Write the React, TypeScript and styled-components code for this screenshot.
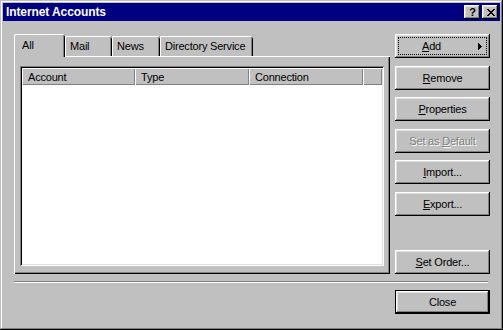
import React from "react";
import styled, { createGlobalStyle } from "styled-components";

const GlobalStyle = createGlobalStyle`
  html, body {
    margin: 0;
    padding: 0;
    background: #c0c0c0;
  }
  body {
    font-family: "Liberation Sans", Arial, sans-serif;
    font-size: 11px;
    letter-spacing: -0.2px;
    color: #000;
  }
`;

const raised =
  "inset -1px -1px #000, inset 1px 1px #fff, inset -2px -2px #808080, inset 2px 2px #dfdfdf";

const Window = styled.div`
  width: 503px;
  height: 330px;
  box-sizing: border-box;
  padding: 3px;
  background: #c0c0c0;
  box-shadow: inset -1px -1px #000, inset 1px 1px #c0c0c0,
    inset -2px -2px #808080, inset 2px 2px #fff;
  display: flex;
  flex-direction: column;
`;

const TitleBar = styled.div`
  height: 18px;
  background: #000080;
  display: flex;
  align-items: center;
  padding: 0 2px 0 3px;
`;

const TitleText = styled.div`
  flex: 1;
  color: #fff;
  font-weight: bold;
  font-size: 12px;
  letter-spacing: -0.1px;
`;

const CaptionButton = styled.div<{ $gap?: number }>`
  width: 16px;
  height: 14px;
  margin-left: ${(p) => p.$gap ?? 0}px;
  background: #c0c0c0;
  box-shadow: ${raised};
  display: flex;
  align-items: center;
  justify-content: center;
  font-weight: bold;
  font-size: 11px;
  line-height: 14px;
  padding-left: 1px;
  box-sizing: border-box;
`;

const Body = styled.div`
  flex: 1;
  padding: 13px 10px 0 11px;
  display: flex;
  flex-direction: column;
`;

const TopRow = styled.div`
  display: flex;
  height: 240px;
`;

const TabControl = styled.div`
  width: 376px;
  display: flex;
  flex-direction: column;
`;

const TabStrip = styled.div`
  display: flex;
  align-items: flex-start;
  height: 22px;
`;

const Tab = styled.div<{ $active?: boolean; $width: number }>`
  position: relative;
  z-index: ${(p) => (p.$active ? 2 : 0)};
  width: ${(p) => p.$width}px;
  height: ${(p) => (p.$active ? 23 : 20)}px;
  margin-top: ${(p) => (p.$active ? 0 : 2)}px;
  box-sizing: border-box;
  padding: ${(p) => (p.$active ? "4px 0 0 8px" : "3px 0 0 5px")};
  background: #c0c0c0;
  border-radius: 2px 2px 0 0;
  box-shadow: inset 1px 0 #fff, inset 0 1px #fff, inset -1px 0 #000,
    inset -2px 0 #808080;
  line-height: 14px;
  white-space: nowrap;
`;

const Panel = styled.div`
  height: 218px;
  box-sizing: border-box;
  padding: 10px 6px 0 6px;
  background: #c0c0c0;
  box-shadow: inset 1px 1px #fff, inset -1px -1px #000,
    inset -2px -2px #808080;
`;

const ListView = styled.div`
  height: 200px;
  box-sizing: border-box;
  padding: 2px;
  background: #fff;
  box-shadow: inset 1px 1px #808080, inset -1px -1px #fff,
    inset 2px 2px #000, inset -2px -2px #dfdfdf;
`;

const HeaderRow = styled.div`
  display: flex;
  height: 17px;
`;

const HeaderCell = styled.div<{ $width?: number }>`
  ${(p) => (p.$width ? `width: ${p.$width}px;` : "flex: 1;")}
  box-sizing: border-box;
  padding: 1px 0 0 6px;
  background: #c0c0c0;
  box-shadow: inset 1px 1px #fff, inset -1px -1px #808080;
  line-height: 16px;
  white-space: nowrap;
`;

const ButtonColumn = styled.div`
  width: 95px;
  margin-left: 5px;
  display: flex;
  flex-direction: column;
`;

const Button = styled.div<{
  $gap?: number;
  $push?: boolean;
  $default?: boolean;
  $disabled?: boolean;
}>`
  height: 24px;
  flex-shrink: 0;
  margin-top: ${(p) => (p.$push ? "auto" : `${p.$gap ?? 0}px`)};
  box-sizing: border-box;
  background: #c0c0c0;
  box-shadow: ${(p) =>
    p.$default
      ? "inset 0 0 0 1px #000, inset -2px -2px #000, inset 2px 2px #fff, inset -3px -3px #808080, inset 3px 3px #dfdfdf"
      : raised};
  display: flex;
  align-items: center;
  justify-content: center;
  padding: 3px;
  color: ${(p) => (p.$disabled ? "#808080" : "#000")};
  text-shadow: ${(p) => (p.$disabled ? "1px 1px #fff" : "none")};
  white-space: nowrap;
  line-height: 14px;
`;

const FocusRing = styled.div`
  flex: 1;
  align-self: stretch;
  border: 1px dotted #000;
  display: flex;
  align-items: center;
  padding-left: 23px;
`;

const Arrow = styled.svg`
  margin-left: auto;
  margin-right: 4px;
`;

const Separator = styled.div`
  width: 474px;
  margin-top: 7px;
  border-top: 1px solid #808080;
  border-bottom: 1px solid #fff;
`;

const BottomRow = styled.div`
  display: flex;
  justify-content: flex-end;
  margin-top: 7px;
`;

const CloseWrap = styled.div`
  width: 95px;
  display: flex;
  flex-direction: column;
`;

const tabs = [
  { label: "All", width: 51, active: true },
  { label: "Mail", width: 47 },
  { label: "News", width: 48 },
  { label: "Directory Service", width: 93 },
];

const App: React.FC = () => {
  return (
    <>
      <GlobalStyle />
      <Window>
        <TitleBar>
          <TitleText>Internet Accounts</TitleText>
          <CaptionButton>?</CaptionButton>
          <CaptionButton $gap={2}>
            <svg width="8" height="7" viewBox="0 0 8 7" shapeRendering="crispEdges">
              <path
                d="M0 0h2v1H0zM6 0h2v1H6zM1 1h2v1H1zM5 1h2v1H5zM2 2h4v1H2zM3 3h2v1H3zM2 4h4v1H2zM1 5h2v1H1zM5 5h2v1H5zM0 6h2v1H0zM6 6h2v1H6z"
                fill="#000"
              />
            </svg>
          </CaptionButton>
        </TitleBar>
        <Body>
          <TopRow>
            <TabControl>
              <TabStrip>
                {tabs.map((t) => (
                  <Tab key={t.label} $active={t.active} $width={t.width}>
                    {t.label}
                  </Tab>
                ))}
              </TabStrip>
              <Panel>
                <ListView>
                  <HeaderRow>
                    <HeaderCell $width={113}>Account</HeaderCell>
                    <HeaderCell $width={114}>Type</HeaderCell>
                    <HeaderCell $width={114}>Connection</HeaderCell>
                    <HeaderCell />
                  </HeaderRow>
                </ListView>
              </Panel>
            </TabControl>
            <ButtonColumn>
              <Button>
                <FocusRing>
                  <span>
                    <u>A</u>dd
                  </span>
                  <Arrow width="4" height="7" viewBox="0 0 4 7" shapeRendering="crispEdges">
                    <path d="M0 0h1v7H0zM1 1h1v5H1zM2 2h1v3H2zM3 3h1v1H3z" fill="#000" />
                  </Arrow>
                </FocusRing>
              </Button>
              <Button $gap={8}>
                <span>
                  <u>R</u>emove
                </span>
              </Button>
              <Button $gap={7}>
                <span>
                  <u>P</u>roperties
                </span>
              </Button>
              <Button $gap={8} $disabled>
                <span>
                  Set as <u>D</u>efault
                </span>
              </Button>
              <Button $gap={7}>
                <span>
                  <u>I</u>mport...
                </span>
              </Button>
              <Button $gap={8}>
                <span>
                  <u>E</u>xport...
                </span>
              </Button>
              <Button $push>
                <span>
                  <u>S</u>et Order...
                </span>
              </Button>
            </ButtonColumn>
          </TopRow>
          <Separator />
          <BottomRow>
            <CloseWrap>
              <Button $default>Close</Button>
            </CloseWrap>
          </BottomRow>
        </Body>
      </Window>
    </>
  );
};

export default App;
